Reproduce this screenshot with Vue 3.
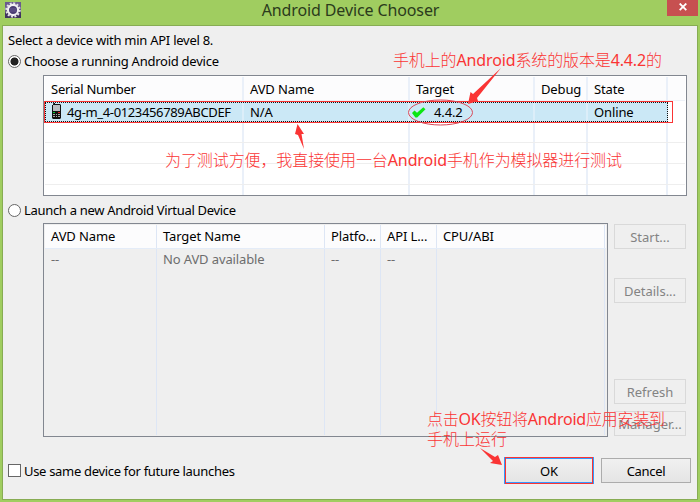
<script setup>
const deviceCols = ['Serial Number', 'AVD Name', 'Target', 'Debug', 'State', '']
const avdCols = ['AVD Name', 'Target Name', 'Platfo...', 'API L...', 'CPU/ABI', '']
const avdRow = ['--', 'No AVD available', '--', '--', '', '']
</script>

<template>
  <div class="window">
    <header class="titlebar">
      <svg class="logo" width="16" height="16" viewBox="0 0 16 16">
        <rect width="16" height="16" fill="#6a5b8e" />
        <path d="M0 9H16V16H0Z" fill="#40345f" />
        <circle cx="8" cy="8" r="6.7" fill="none" stroke="#e4e2e8" stroke-width="2" stroke-dasharray="2 1.508" />
        <circle cx="8" cy="8" r="5.1" fill="#4a3c72" stroke="#f2f1f3" stroke-width="2.1" />
        <path d="M4.500 7h7M4.500 9h7" stroke="#71629a" stroke-width=".8" />
      </svg>
      <h1>Android Device Chooser</h1>
      <button class="close" aria-label="Close">
        <svg width="8" height="8" viewBox="0 0 8 8"><path d="M.7 .5L7.3 7.1M7.3 .5L.7 7.1" stroke="#fff" stroke-width="1.8" /></svg>
      </button>
    </header>

    <main class="client">
      <p class="intro">Select a device with min API level 8.</p>
      <label class="choice first"><i class="radio on"></i><span>Choose a running Android device</span></label>

      <section class="table devices">
        <div class="row head">
          <span v-for="(c, i) in deviceCols" :key="i" class="cell">{{ c }}</span>
        </div>
        <div class="row selected">
          <span class="cell serial">
            <svg width="10" height="16" viewBox="0 0 10 16">
              <path d="M1 2V1Q1 0 2 0h1v1h5l1 1v13l-1 1H1l-1-1V2Z" fill="#111" />
              <rect x="1" y="2" width="7" height="6" fill="#b9bec2" />
              <path d="M1 9h2v1H1z" fill="#0c3" /><path d="M6 9h2v1H6z" fill="#e22" />
              <path d="M1 11h2v1H1zM4 11h1v1H4zM6 11h2v1H6zM1 13h2v1H1zM4 13h1v1H4zM6 13h2v1H6z" fill="#aaa" />
            </svg>
            <span class="serial-text">4g-m_4-0123456789ABCDEF</span>
          </span>
          <span class="cell">N/A</span>
          <span class="cell target">
            <svg width="14" height="11" viewBox="0 0 14 11"><path d="M0 6L2.5 3.5L5 5.7L11.3 .3L13.5 2.2L5.2 10.5H3.4Z" fill="#0be612" /></svg>
            <span>4.4.2</span>
          </span>
          <span class="cell"></span>
          <span class="cell">Online</span>
        </div>
        <div v-for="n in 4" :key="n" class="row blank"><span v-for="k in 6" :key="k" class="cell"></span></div>
      </section>

      <label class="choice second"><i class="radio"></i><span>Launch a new Android Virtual Device</span></label>

      <div class="avd-area">
        <section class="table avds">
          <div class="row head"><span v-for="(c, i) in avdCols" :key="i" class="cell">{{ c }}</span></div>
          <div class="row body"><span v-for="(c, i) in avdRow" :key="i" class="cell">{{ c }}</span></div>
        </section>
        <aside class="actions">
          <button class="btn off">Start...</button>
          <button class="btn off">Details...</button>
          <button class="btn off">Refresh</button>
          <button class="btn off">Manager...</button>
        </aside>
      </div>

      <footer class="bottom">
        <label class="choice"><i class="check"></i><span>Use same device for future launches</span></label>
        <button class="btn ok">OK</button>
        <button class="btn cancel">Cancel</button>
      </footer>
    </main>

    <svg class="notes" width="700" height="502" viewBox="0 0 700 502">
      <g fill="none" stroke="#fa3434">
        <rect x="44.5" y="101.5" width="628" height="21" />
        <ellipse cx="440.5" cy="112.5" rx="32" ry="12.5" stroke="#d94a5a" />
        <rect x="505.5" y="457.5" width="87" height="26" />
      </g>
      <g fill="#fa3434">
        <path d="M501 68L477 98L478 101L468 104L470.500 92L473 94Z" />
        <path d="M297.500 124L304 134L301.500 134L304 149L298 135L295 134Z" />
        <path d="M480 448L495 457L498 455L502 465L490 463L493 461Z" />
      </g>
      <g class="note-text">
        <text x="393" y="66" textLength="269">手机上的<tspan>Android</tspan>系统的版本是<tspan>4.4.2</tspan>的</text>
        <text x="165" y="166" textLength="457">为了测试方便，我直接使用一台<tspan>Android</tspan>手机作为模拟器进行测试</text>
        <text x="427" y="425" textLength="238">点击<tspan>OK</tspan>按钮将<tspan>Android</tspan>应用安装到</text>
        <text x="427" y="445" textLength="80">手机上运行</text>
      </g>
    </svg>
  </div>
</template>

<style>
body { margin: 0; }
</style>

<style scoped>
* { box-sizing: border-box; }
.window {
  position: relative; width: 700px; height: 502px; padding: 0 2px 2px; overflow: hidden;
  background: #a0cd60; color: #000;
  font: 13px/20px "Noto Sans", "Noto Sans CJK SC", sans-serif;
}
.titlebar { display: grid; grid-template-columns: 1fr auto 1fr; height: 25px; align-items: start; }
.logo { margin: 2px 0 0 3px; }
h1 { margin: 0; padding-left: 1px; font-size: 16px; line-height: 21px; font-weight: 400; letter-spacing: -.12px; color: #2b3b1c; white-space: nowrap; }
.close { justify-self: end; display: flex; align-items: center; justify-content: center; width: 31px; height: 16px; padding: 0 0 3px; border: 0; background: #c75050; }
.client { display: flex; flex-direction: column; width: 696px; height: 475px; border: 1px solid #87ac53; background: #efefef; padding-left: 5px; }
.intro { margin: 4px 0 0; height: 20px; letter-spacing: -.26px; }
.choice { display: flex; align-items: center; gap: 3px; height: 20px; white-space: nowrap; letter-spacing: -.31px; }
.first { margin-top: 1px; margin-bottom: 1px; letter-spacing: -.25px; }
.second { margin-top: 4px; }
.radio { width: 13px; height: 13px; border: 1px solid #666; border-radius: 50%; background: #fff; }
.on { background: radial-gradient(circle, #222 0 3.6px, #fff 4.4px); }
.check { width: 13px; height: 13px; border: 1px solid #666; background: #fff; }
.table { margin-left: 35px; border: 1px solid #828790; background: #fff; overflow: hidden; }
.row { display: grid; }
.cell { padding-left: 6px; border-right: 2px solid #eaf0f9; white-space: nowrap; overflow: hidden; letter-spacing: -.12px; }
.cell:last-child { border-right: 0; }
.devices { width: 644px; height: 121px; margin-top: 3px; padding: 1px; }
.devices .row { grid-template-columns: 199px 166px 125px 53px 80px 1fr; }
.devices .head { height: 24px; line-height: 24px; border-bottom: 1px solid #eef2f8; background: #fcfcfd; }
.devices .head .cell:first-child { letter-spacing: -.25px; }
.devices .selected { width: 623px; height: 20px; margin-top: 1px; line-height: 20px; grid-template-columns: 199px 166px 125px 53px 80px; background: #cbe8f6; outline: 1px dotted #111; outline-offset: -1px; }
.devices .selected .cell { border-color: #dceef9; }
.serial, .target { display: flex; align-items: center; }
.devices .serial { gap: 5px; padding-left: 7px; }
.serial svg { margin-top: -2px; }
.serial-text { letter-spacing: -.36px; }
.target { gap: 8px; }
.devices .target { padding-left: 2px; }
.blank { height: 21px; border-bottom: 1px solid #eee; }
.avd-area { display: flex; gap: 6px; margin-top: 3px; }
.avds { display: flex; flex-direction: column; width: 565px; height: 214px; padding: 1px; background: #efefef; }
.avds .row { grid-template-columns: 112px 168px 56px 56px 168px 1fr; }
.avds .cell { border-right: 1px solid #dde6f5; }
.avds .cell:last-child { border: 0; }
.avds .head { height: 24px; line-height: 23px; background: #fcfcfd; border-bottom: 1px solid #e4ecf8; }
.avds .body { flex: 1; color: #6d6d6d; line-height: 21px; }
.actions { display: flex; flex-direction: column; padding-top: 1px; }
.btn { font: inherit; line-height: 22px; height: 25px; padding: 0; border: 1px solid #acacac; background: linear-gradient(#f0f0f0, #e5e5e5); color: #000; }
.off { width: 72px; border-color: #d9d9d9; background: #efefef; color: #838383; }
.off:nth-child(2) { margin-top: 29px; }
.off:nth-child(3) { margin-top: 76px; }
.off:nth-child(4) { margin-top: 7px; }
.bottom { display: flex; align-items: center; height: 27px; margin-top: 20px; }
.bottom .choice { flex: none; width: 496px; }
.ok { width: 90px; height: 27px; border: 2px solid #3399ff; }
.cancel { width: 90px; margin-left: 7px; letter-spacing: -.3px; }
.notes { position: absolute; inset: 0; pointer-events: none; }
.note-text { fill: #fa3434; font: 300 16px "Noto Sans CJK SC", sans-serif; }
.note-text tspan { font-family: "Noto Sans", sans-serif; font-weight: 400; }
</style>
